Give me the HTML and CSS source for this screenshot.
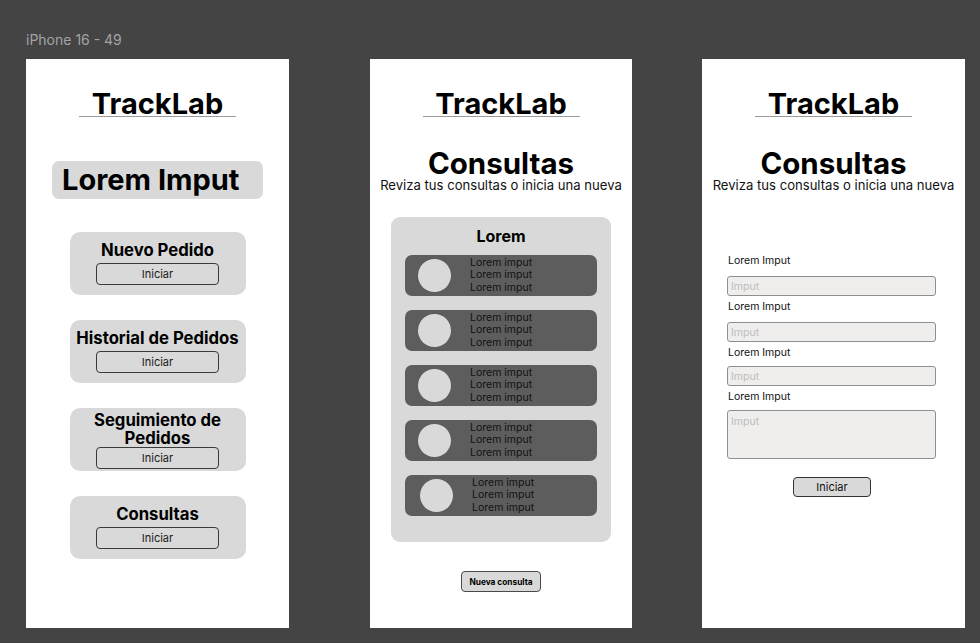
FILE: index.html
```html
<!DOCTYPE html>
<html lang="es">
<head>
<meta charset="utf-8">
<title>TrackLab</title>
<link rel="stylesheet" href="styles.css">
</head>
<body>
<div class="canvas">
  <div class="frame-label">iPhone 16 - 49</div>

  <section class="phone phone-home">
    <div class="brand">TrackLab</div>
    <div class="hero">Lorem Imput</div>
    <div class="card">
      <div class="card-title">Nuevo Pedido</div>
      <button class="btn-outline">Iniciar</button>
    </div>
    <div class="card">
      <div class="card-title">Historial de Pedidos</div>
      <button class="btn-outline">Iniciar</button>
    </div>
    <div class="card card-tall">
      <div class="card-title">Seguimiento de<br>Pedidos</div>
      <button class="btn-outline">Iniciar</button>
    </div>
    <div class="card">
      <div class="card-title">Consultas</div>
      <button class="btn-outline">Iniciar</button>
    </div>
  </section>

  <section class="phone phone-list">
    <div class="brand">TrackLab</div>
    <h1 class="page-title">Consultas</h1>
    <p class="subtitle">Reviza tus consultas o inicia una nueva</p>
    <div class="panel">
      <div class="panel-title">Lorem</div>
      <div class="row"><span class="avatar"></span><div class="row-text">Lorem imput<br>Lorem imput<br>Lorem imput</div></div>
      <div class="row"><span class="avatar"></span><div class="row-text">Lorem imput<br>Lorem imput<br>Lorem imput</div></div>
      <div class="row"><span class="avatar"></span><div class="row-text">Lorem imput<br>Lorem imput<br>Lorem imput</div></div>
      <div class="row"><span class="avatar"></span><div class="row-text">Lorem imput<br>Lorem imput<br>Lorem imput</div></div>
      <div class="row row-shift"><span class="avatar"></span><div class="row-text">Lorem imput<br>Lorem imput<br>Lorem imput</div></div>
    </div>
    <button class="btn-new">Nueva consulta</button>
  </section>

  <section class="phone phone-form">
    <div class="brand">TrackLab</div>
    <h1 class="page-title">Consultas</h1>
    <p class="subtitle">Reviza tus consultas o inicia una nueva</p>
    <form class="form">
      <label class="field-label">Lorem Imput</label>
      <input class="field" type="text" placeholder="Imput">
      <label class="field-label">Lorem Imput</label>
      <input class="field" type="text" placeholder="Imput">
      <label class="field-label">Lorem Imput</label>
      <input class="field field-tight" type="text" placeholder="Imput">
      <label class="field-label">Lorem Imput</label>
      <textarea class="field field-area" placeholder="Imput"></textarea>
      <button class="btn-fill" type="button">Iniciar</button>
    </form>
  </section>
</div>
</body>
</html>
```
FILE: styles.css
```css
* { box-sizing: border-box; }

html, body {
  margin: 0;
  padding: 0;
  background: #444444;
  font-family: Inter, "Noto Sans", "Liberation Sans", sans-serif;
  color: #000;
}

.canvas {
  position: relative;
  width: 980px;
  height: 643px;
  overflow: hidden;
}

.frame-label {
  position: absolute;
  left: 26px;
  top: 31px;
  font-size: 14px;
  line-height: 18px;
  color: #a3a3a3;
}

.phone {
  position: absolute;
  top: 59px;
  width: 263px;
  height: 569px;
  background: #ffffff;
  display: flex;
  flex-direction: column;
  align-items: center;
}
.phone-home { left: 26px; }
.phone-list { left: 370px; width: 262px; }
.phone-form { left: 702px; }

.brand {
  margin-top: 33px;
  width: 157px;
  text-align: center;
  font-size: 29px;
  line-height: 24px;
  font-weight: 700;
  border-bottom: 1px solid #9a9a9a;
}

/* home */
.hero {
  margin-top: 44px;
  width: 211px;
  height: 38px;
  padding-left: 10px;
  background: #d9d9d9;
  border-radius: 7px;
  font-size: 29px;
  line-height: 38px;
  font-weight: 700;
}

.card {
  margin-top: 25px;
  width: 176px;
  height: 63px;
  padding-top: 8px;
  background: #d9d9d9;
  border-radius: 10px;
  display: flex;
  flex-direction: column;
  align-items: center;
}
.hero + .card { margin-top: 33px; }

.card-title {
  font-size: 16.7px;
  line-height: 20px;
  font-weight: 700;
  text-align: center;
  white-space: nowrap;
}

.card-tall { padding-top: 3px; }
.card-tall .card-title { line-height: 18px; }
.card-tall .btn-outline { margin-top: 0; }

.btn-outline {
  margin-top: 3px;
  width: 123px;
  height: 22px;
  padding: 0;
  background: transparent;
  border: 1px solid #3a3a3a;
  border-radius: 4px;
  font-family: inherit;
  font-size: 11px;
  line-height: 20px;
  color: #1a1a1a;
}

/* list */
.page-title {
  margin: 32px 0 0;
  font-size: 29.5px;
  line-height: 28px;
  font-weight: 700;
}

.subtitle {
  margin: 0;
  font-size: 13.1px;
  line-height: 16px;
  white-space: nowrap;
  color: #111;
}

.panel {
  margin-top: 24px;
  width: 220px;
  height: 325px;
  padding-top: 9px;
  background: #d9d9d9;
  border-radius: 9px;
  display: flex;
  flex-direction: column;
  align-items: center;
}

.panel-title {
  font-size: 16px;
  line-height: 20px;
  font-weight: 700;
  margin-bottom: 9px;
}

.row {
  width: 192px;
  height: 41px;
  margin-bottom: 14px;
  padding-left: 13px;
  background: #5e5d5d;
  border-radius: 7px;
  display: flex;
  align-items: center;
}
.row-shift { padding-left: 15px; }

.avatar {
  width: 33px;
  height: 33px;
  border-radius: 50%;
  background: #d9d9d9;
  flex: none;
}

.row-text {
  margin-left: 19px;
  font-size: 10.5px;
  line-height: 12.5px;
  color: #111;
}

.btn-new {
  margin-top: 29px;
  width: 80px;
  height: 21px;
  padding: 0;
  background: #d9d9d9;
  border: 1px solid #4a4a4a;
  border-radius: 4px;
  font-family: inherit;
  font-size: 8.3px;
  font-weight: 700;
  color: #000;
}

/* form */
.form {
  align-self: flex-start;
  margin: 61px 0 0 25px;
  width: 210px;
  display: flex;
  flex-direction: column;
}

.field-label {
  font-size: 10.5px;
  line-height: 14px;
  color: #111;
  padding-left: 1px;
  margin-bottom: 8px;
}

.field {
  display: block;
  width: 209px;
  height: 20px;
  margin: 0 0 4px;
  padding: 0 3px;
  background: #efeeed;
  border: 1px solid #8f8f8f;
  border-radius: 3px;
  font-family: inherit;
  font-size: 10.5px;
  color: #333;
  outline: none;
}
.field::placeholder { color: #bdbdbd; }

.field-tight { margin-top: -2px; }

.field-area {
  height: 49px;
  margin-top: -2px;
  padding-top: 4px;
  resize: none;
  line-height: 13px;
}

.btn-fill {
  align-self: center;
  margin-top: 14px;
  width: 78px;
  height: 20px;
  padding: 0;
  background: #d9d9d9;
  border: 1px solid #333;
  border-radius: 4px;
  font-family: inherit;
  font-size: 11px;
  color: #111;
}
```
